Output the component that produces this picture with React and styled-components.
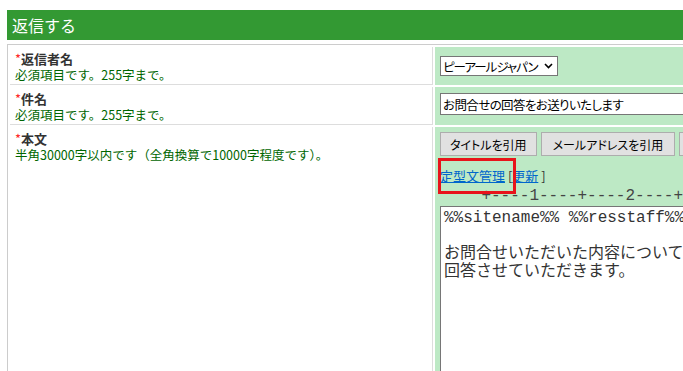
import React from 'react';
import styled, { createGlobalStyle } from 'styled-components';

const Global = createGlobalStyle`
  html, body { margin: 0; padding: 0; background: #fff; overflow: hidden; }
  body { font-family: "Noto Sans CJK JP", "Noto Sans", sans-serif; }
`;

const Page = styled.div`
  width: 1100px;
  padding: 10px 0 0 7px;
`;

const Header = styled.h2`
  margin: 0 0 4px;
  height: 30px;
  line-height: 30px;
  padding-left: 5px;
  background: #339933;
  color: #fff;
  font-size: 16px;
  font-weight: normal;
`;

const Form = styled.div`
  display: grid;
  grid-template-columns: 423px 1fr;
  gap: 2px;
  padding: 2px 0 0 2px;
  border-top: 1px solid #cccccc;
  border-left: 1px solid #cccccc;
`;

const LabelCell = styled.div`
  padding: 4px 5px 2px;
  border-right: 1px solid #dddddd;
  border-bottom: 1px solid #dddddd;
  min-height: ${(p) => p.$minH || 0}px;
`;

const Label = styled.div`
  font-size: 13px;
  line-height: 16px;
  font-weight: bold;
  color: #333;
`;

const Req = styled.span`
  color: #ff2a2a;
  font-weight: normal;
`;

const Note = styled.div`
  font-size: 12.5px;
  line-height: 15px;
  color: #006600;
`;

const FieldCell = styled.div`
  background: #bde9c5;
  padding: ${(p) => p.$pt || 6}px 5px 6px;
`;

const SelectWrap = styled.span`
  position: relative;
  display: inline-block;
`;

const Select = styled.select`
  appearance: none;
  -webkit-appearance: none;
  display: block;
  box-sizing: border-box;
  height: 20px;
  margin: 0;
  padding: 0 18px 0 2px;
  border: 1px solid #767676;
  border-radius: 0;
  background: #fff;
  color: #000;
  font-family: "Noto Sans CJK JP", sans-serif;
  font-size: 12.5px;
  letter-spacing: -1px;
  font-feature-settings: "palt";
`;

const Chevron = styled.svg`
  position: absolute;
  right: 5px;
  top: 7px;
  pointer-events: none;
`;

const TextInput = styled.input`
  display: block;
  box-sizing: border-box;
  width: 620px;
  height: 22px;
  margin: 0;
  padding: 0 2px;
  border: 1px solid #767676;
  border-radius: 0;
  background: #fff;
  color: #000;
  font-family: "Noto Sans CJK JP", sans-serif;
  font-size: 12.5px;
  letter-spacing: -0.6px;
  font-feature-settings: "palt";
`;

const ButtonRow = styled.div`
  display: flex;
  gap: 4px;
`;

const Button = styled.button`
  flex-shrink: 0;
  height: 24px;
  margin: 0;
  padding: 0 ${(p) => p.$px || 9}px;
  border: 1px solid #adadad;
  border-radius: 0;
  background: #e1e1e1;
  color: #000;
  font-family: "Noto Sans CJK JP", sans-serif;
  font-size: 12px;
  font-feature-settings: "palt";
  white-space: nowrap;
`;

const LinkLine = styled.div`
  margin-top: 11px;
  font-size: 13px;
  line-height: 18px;
  color: #333;
`;

const Link = styled.a`
  color: #0066cc;
  text-decoration: underline;
`;

const Marked = styled.span`
  position: relative;
  &::after {
    content: '';
    position: absolute;
    left: -2px;
    right: -11px;
    top: -8px;
    bottom: -9px;
    border: 3px solid #e8141b;
    pointer-events: none;
  }
`;

const Ruler = styled.div`
  margin-top: 3px;
  padding-left: 3px;
  font-family: "Liberation Mono", monospace;
  font-size: 16px;
  line-height: 16px;
  color: #444;
  white-space: pre;
`;

const Body = styled.textarea`
  display: block;
  box-sizing: border-box;
  width: 620px;
  height: 220px;
  margin: 2px 0 0;
  padding: 2px 3px;
  border: 1px solid #767676;
  border-radius: 0;
  background: #fff;
  color: #333;
  font-family: "Liberation Mono", "Noto Sans CJK JP", monospace;
  font-size: 16px;
  line-height: 18px;
  resize: none;
`;

export default function App() {
  return (
    <>
      <Global />
      <Page>
        <Header>返信する</Header>
        <Form>
          <LabelCell>
            <Label><Req>*</Req>返信者名</Label>
            <Note>必須項目です。255字まで。</Note>
          </LabelCell>
          <FieldCell>
            <SelectWrap>
              <Select defaultValue="pr">
                <option value="pr">ピーアールジャパン</option>
              </Select>
              <Chevron width="9" height="6" viewBox="0 0 9 6">
                <path d="M1 1 L4.5 4.5 L8 1" fill="none" stroke="#000" strokeWidth="1.6" />
              </Chevron>
            </SelectWrap>
          </FieldCell>

          <LabelCell>
            <Label><Req>*</Req>件名</Label>
            <Note>必須項目です。255字まで。</Note>
          </LabelCell>
          <FieldCell>
            <TextInput defaultValue="お問合せの回答をお送りいたします" />
          </FieldCell>

          <LabelCell $minH={260}>
            <Label><Req>*</Req>本文</Label>
            <Note>半角30000字以内です（全角換算で10000字程度です）。</Note>
          </LabelCell>
          <FieldCell $pt={5}>
            <ButtonRow>
              <Button type="button">タイトルを引用</Button>
              <Button type="button" $px={11}>メールアドレスを引用</Button>
              <Button type="button">署名を引用</Button>
            </ButtonRow>
            <LinkLine>
              <Marked><Link href="#">定型文管理</Link></Marked> [<Link href="#">更新</Link> ]
            </LinkLine>
            <Ruler>{'    +----1----+----2----+----3----+----4'}</Ruler>
            <Body
              defaultValue={'%%sitename%% %%resstaff%%\n\nお問合せいただいた内容について\n回答させていただきます。'}
            />
          </FieldCell>
        </Form>
      </Page>
    </>
  );
}
